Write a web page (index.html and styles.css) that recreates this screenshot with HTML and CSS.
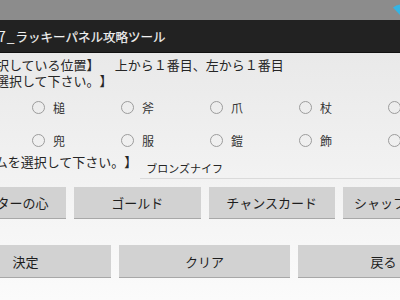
FILE: index.html
```html
<!DOCTYPE html>
<html lang="ja">
<head>
<meta charset="utf-8">
<link rel="stylesheet" href="styles.css">
</head>
<body>
<div class="screen">
  <div class="statusbar">
    <svg class="wifi" width="16" height="12" viewBox="0 0 16 12"><path d="M8 12 L0 3.6 A11.5 11.5 0 0 1 16 3.6 Z" fill="#33b5e5"/></svg>
  </div>
  <div class="titlebar"><span class="title-num">7_</span><span class="title">ラッキーパネル攻略ツール</span></div>
  <div class="content">
    <div class="line"><span class="label">【現在選択している位置】</span><span class="pos">上から１番目、左から１番目</span></div>
    <div class="line">【種類を選択して下さい。】</div>
    <div class="radios">
      <div class="radio"><span class="circle"></span><span class="rlabel">槌</span></div>
      <div class="radio"><span class="circle"></span><span class="rlabel">斧</span></div>
      <div class="radio"><span class="circle"></span><span class="rlabel">爪</span></div>
      <div class="radio"><span class="circle"></span><span class="rlabel">杖</span></div>
      <div class="radio"><span class="circle"></span><span class="rlabel">鞭</span></div>
    </div>
    <div class="radios">
      <div class="radio"><span class="circle"></span><span class="rlabel">兜</span></div>
      <div class="radio"><span class="circle"></span><span class="rlabel">服</span></div>
      <div class="radio"><span class="circle"></span><span class="rlabel">鎧</span></div>
      <div class="radio"><span class="circle"></span><span class="rlabel">飾</span></div>
      <div class="radio"><span class="circle"></span><span class="rlabel">靴</span></div>
    </div>
    <div class="line3"><span class="label">【アイテムを選択して下さい。】</span><span class="item">ブロンズナイフ</span></div>
    <div class="rule"></div>
    <div class="btnrow">
      <div class="btn">モンスターの心</div>
      <div class="btn">ゴールド</div>
      <div class="btn">チャンスカード</div>
      <div class="btn">シャッフルカード</div>
    </div>
    <div class="btnrow bottom">
      <div class="btn">決定</div>
      <div class="btn">クリア</div>
      <div class="btn">戻る</div>
    </div>
  </div>
</div>
</body>
</html>
```
FILE: styles.css
```css
html, body {
  margin: 0;
  padding: 0;
}
body {
  width: 400px;
  height: 300px;
  overflow: hidden;
  font-family: Roboto, "Noto Sans CJK JP", sans-serif;
  background: #f4f4f4;
  text-spacing-trim: space-all;
}
.screen {
  width: 400px;
  height: 300px;
  overflow: hidden;
  display: flex;
  flex-direction: column;
}
.statusbar {
  height: 20px;
  flex: none;
  background: #8c8c8c;
  display: flex;
  justify-content: flex-end;
  align-items: flex-start;
}
.wifi {
  margin-top: 4px;
  margin-right: -9px;
}
.titlebar {
  height: 32px;
  flex: none;
  background: #222222;
  border-bottom: 1px solid #111;
  display: flex;
  align-items: center;
  color: #f2f2f2;
  white-space: nowrap;
}
.title-num {
  font-family: "Noto Sans CJK JP", sans-serif;
  font-size: 14px;
  letter-spacing: 1px;
  margin-left: -2px;
}
.title {
  font-family: "Noto Sans CJK JP", sans-serif;
  font-size: 12.5px;
  margin-left: 0;
  -webkit-text-stroke: 0.2px #f2f2f2;
}
.content {
  flex: 1;
  width: 529px;
  margin-left: -60px;
  background: linear-gradient(#e9e9e9, #f3f3f3 55%, #fbfbfb);
  color: #262626;
  font-family: "Noto Sans CJK JP", sans-serif;
  font-size: 13px;
  padding-top: 4px;
  white-space: nowrap;
}
.line {
  display: flex;
  line-height: 16px;
  height: 16px;
  padding-left: 4px;
}
.pos {
  margin-left: 15px;
}
.radios {
  display: flex;
  height: 26px;
  align-items: center;
  padding-left: 92px;
  margin-top: 5px;
}
.radios + .radios {
  margin-top: 7px;
}
.radio {
  width: 89px;
  flex: none;
  display: flex;
  align-items: center;
}
.circle {
  width: 11px;
  height: 11px;
  border: 1px solid #9c9c9c;
  border-radius: 50%;
  flex: none;
}
.rlabel {
  margin-left: 8px;
  font-size: 12px;
  color: #333;
}
.line3 {
  display: flex;
  align-items: flex-start;
  height: 22px;
  padding-left: 4px;
}
.line3 .label {
  line-height: 16px;
  margin-top: 1px;
}
.item {
  font-size: 11px;
  line-height: 14px;
  padding-top: 8px;
  margin-left: 9px;
}
.rule {
  height: 1px;
  margin-top: 3px;
  margin-left: 200px;
  background: #dadada;
}
.btnrow {
  display: flex;
  gap: 8px;
  margin-top: 8px;
}
.btnrow.bottom {
  margin-top: 26px;
}
.btn {
  flex: 1;
  height: 31px;
  background: #d2d2d2;
  border-bottom: 1px solid #a8a8a8;
  display: flex;
  align-items: center;
  justify-content: center;
  font-size: 13px;
  color: #1e1e1e;
}
.btnrow.bottom .btn {
  height: 32px;
}
```
